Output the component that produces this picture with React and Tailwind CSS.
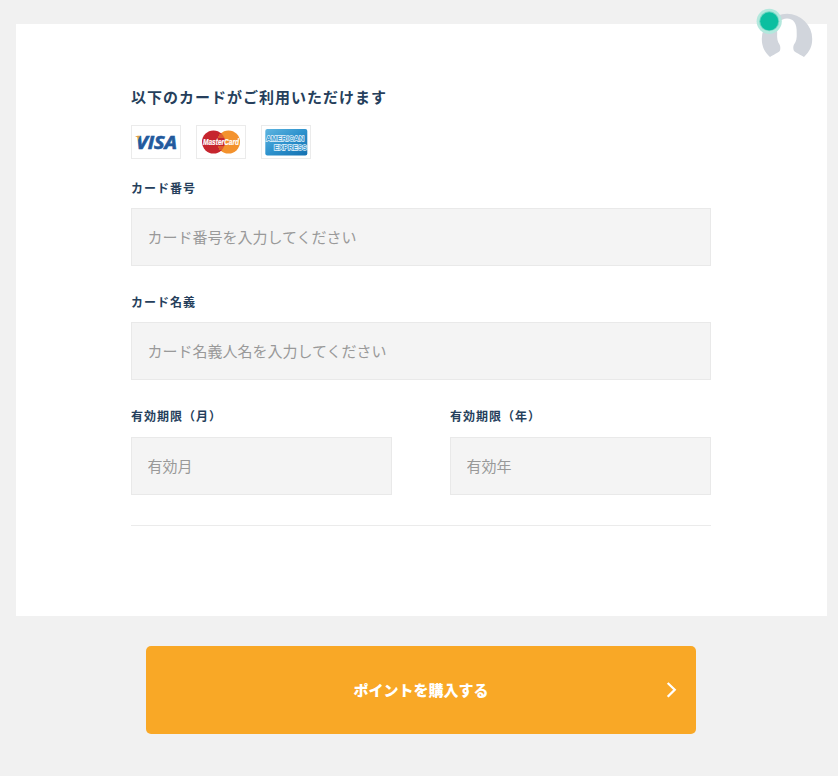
const jp = "font-['Noto_Sans_CJK_JP',sans-serif]";

function CardBadge({ children }) {
  return <div className="flex h-[34px] w-[50px] items-center justify-center border border-[#ebebeb] bg-white">{children}</div>;
}

function Visa() {
  return (
    <svg width="48" height="32" viewBox="0 0 48 32">
      <defs>
        <linearGradient id="visa" gradientUnits="userSpaceOnUse" x1="4" y1="10" x2="12" y2="14">
          <stop offset="0" stopColor="#eba23a" />
          <stop offset="0.35" stopColor="#d9a052" />
          <stop offset="0.45" stopColor="#23599c" />
          <stop offset="1" stopColor="#23599c" />
        </linearGradient>
      </defs>
      <path d="M3.5 10H7.5L9 15C7.5 12.5 5.5 11 3.5 10.5Z" fill="#e5a246" />
      <text x="4" y="22.5" fontFamily="Open Sans, sans-serif" fontWeight="700" fontStyle="italic" fontSize="17.5" textLength="41" lengthAdjust="spacingAndGlyphs" fill="url(#visa)" stroke="url(#visa)" strokeWidth="0.6">VISA</text>
    </svg>
  );
}

function MasterCard() {
  return (
    <svg width="48" height="32" viewBox="0 0 48 32">
      <circle cx="31.5" cy="16" r="11.5" fill="#f3922d" />
      <circle cx="16.5" cy="16" r="11.5" fill="#c6252e" />
      <path d="M22 9h5M21 11h6M21 21h6M22 23h5" stroke="#f3922d" strokeWidth="1" />
      <text x="6" y="19" fontFamily="Liberation Sans, sans-serif" fontWeight="700" fontStyle="italic" fontSize="8.5" textLength="36" lengthAdjust="spacingAndGlyphs" fill="#fff" stroke="#fff" strokeWidth="0.2">MasterCard</text>
    </svg>
  );
}

function Amex() {
  return (
    <svg width="48" height="32" viewBox="0 0 48 32">
      <defs>
        <linearGradient id="amex" x1="0" y1="0" x2="1" y2="1">
          <stop offset="0" stopColor="#5fb5e0" />
          <stop offset="0.5" stopColor="#2d92cd" />
          <stop offset="1" stopColor="#1470b0" />
        </linearGradient>
      </defs>
      <rect x="3.3" y="3" width="42" height="26.5" rx="2" fill="url(#amex)" />
      <g fontFamily="Liberation Sans, sans-serif" fontWeight="700" fontSize="7.2" fill="#3d9bd2" stroke="#e3f3fb" strokeWidth="1.3" paintOrder="stroke">
        <text x="4" y="15.2" textLength="38" lengthAdjust="spacingAndGlyphs">AMERICAN</text>
        <text x="12" y="23.6" textLength="33" lengthAdjust="spacingAndGlyphs">EXPRESS</text>
      </g>
    </svg>
  );
}

function Field({ label, placeholder, labelClass = "leading-[20px]" }) {
  return (
    <label className="flex min-w-0 flex-1 flex-col">
      <span className={`h-[22px] text-[12px] font-bold tracking-[1px] text-[#263f5c] ${labelClass}`}>{label}</span>
      <input placeholder={placeholder} className="mt-[8px] h-[58px] w-full border border-[#e9e9e9] bg-[#f4f4f4] px-[15.5px] pb-[2px] text-[15px] text-[#333] outline-none placeholder:text-[#999]" />
    </label>
  );
}

function Avatar() {
  return (
    <svg className="absolute top-[4px] left-[752px]" width="64" height="58" viewBox="752 4 64 58">
      <path d="M770 57C764 51 761.8 46 761.8 39A25.2 25.2 0 0 1 812.2 39C812.2 46 810 51 804 57Z" fill="#d1d5dc" />
      <path d="M769.8 57.3C773 54.5 778.5 53.2 780 50.5C780.6 48.5 780.4 46 779.5 44.5C777.5 42 776.8 38 777.2 33C776.6 23.5 780.5 18.5 787 18.5C793.5 18.5 797.2 23.5 796.7 33C797 38 796.3 42 794 44.5C793.2 46 793 48.5 793.8 50.5C795.5 53.2 801 54.5 804.2 57.3Z" fill="#fff" />
      <circle cx="769.2" cy="21.3" r="12.6" fill="#b3e8dd" />
      <circle cx="769.2" cy="21.3" r="10" fill="#6fd6c2" />
      <circle cx="769.2" cy="21.3" r="9" fill="#0bbfa0" />
    </svg>
  );
}

export default function App() {
  return (
    <div className={`relative h-[776px] w-[838px] overflow-hidden bg-[#f1f1f1] pt-[24px] pl-[16px] ${jp}`}>
      <main className="h-[592px] w-[811px] bg-white px-[115px] pt-[61px]">
        <h1 className="h-[40px] text-[15px] leading-[24px] font-bold tracking-[1px] text-[#263f5c]">以下のカードがご利用いただけます</h1>
        <div className="flex gap-[15px]">
          <CardBadge><Visa /></CardBadge>
          <CardBadge><MasterCard /></CardBadge>
          <CardBadge><Amex /></CardBadge>
        </div>
        <form className="mt-[19px] w-[580px]">
          <div className="flex h-[114px]"><Field label="カード番号" placeholder="カード番号を入力してください" /></div>
          <div className="flex h-[115px]"><Field label="カード名義" placeholder="カード名義人名を入力してください" /></div>
          <div className="flex h-[119px] gap-[58px] border-b border-[#ebebeb]">
            <Field label="有効期限（月）" placeholder="有効月" labelClass="leading-[18px]" />
            <Field label="有効期限（年）" placeholder="有効年" labelClass="leading-[18px]" />
          </div>
        </form>
      </main>
      <button className="mt-[30px] ml-[130px] flex h-[88px] w-[550px] items-center rounded-[5px] bg-[#f9a826] text-white">
        <span className="w-[30px]" />
        <span className="flex-1 text-center text-[15px] font-black">ポイントを購入する</span>
        <svg className="mr-[18px]" width="12" height="18" viewBox="0 0 12 18" fill="none" stroke="#fff" strokeWidth="2.3"><path d="M1.7 2l7 6.7-7 7" /></svg>
      </button>
      <Avatar />
    </div>
  );
}
